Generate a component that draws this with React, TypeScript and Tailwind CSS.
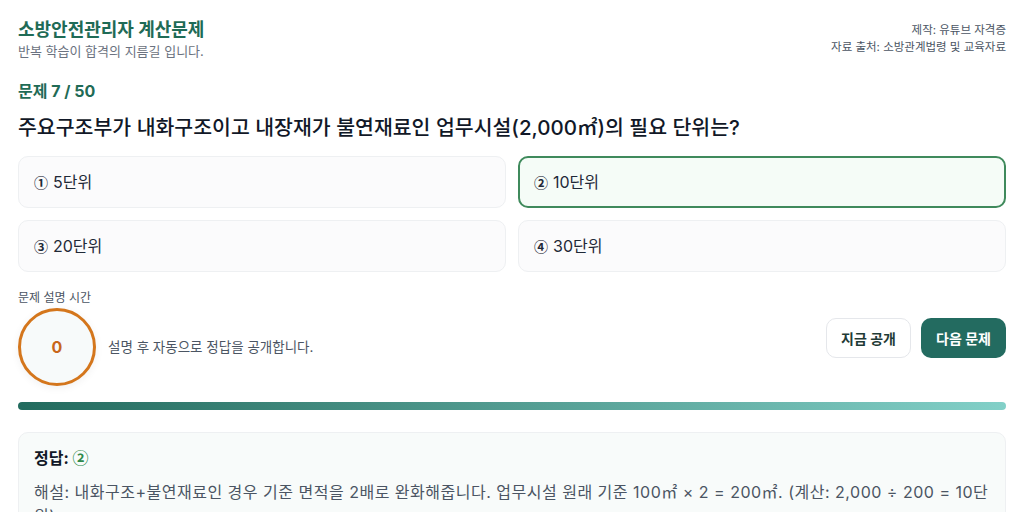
import React from 'react';

const options = [
  { mark: '①', label: '5단위' },
  { mark: '②', label: '10단위' },
  { mark: '③', label: '20단위' },
  { mark: '④', label: '30단위' },
];

const cjk = { fontFamily: '"Noto Sans CJK KR", sans-serif' };

export default function App() {
  const selected = 1;

  return (
    <div
      className="min-h-screen bg-white px-[18px] pt-[18px] pb-6 text-[#1f2937]"
      style={{ fontFamily: 'Inter, "Noto Sans CJK KR", "Noto Sans", sans-serif' }}
    >
      {/* Header */}
      <div className="flex items-start justify-between">
        <div>
          <h1 className="text-[18px] font-bold leading-[24px] text-[#1f6b56]">소방안전관리자 계산문제</h1>
          <p className="text-[13px] leading-[18px] text-[#6b7280]">반복 학습이 합격의 지름길 입니다.</p>
        </div>
        <div className="pt-[4px] text-right text-[11.5px] leading-[17px] text-[#4b5563]">
          <p>제작: 유튜브 자격증</p>
          <p>자료 출처: 소방관계법령 및 교육자료</p>
        </div>
      </div>

      {/* Question */}
      <p className="mt-[20px] text-[16px] font-bold leading-[22px] text-[#1f6b56]">문제 7 / 50</p>
      <h2 className="mt-[12px] text-[20.5px] font-medium leading-[28px] text-[#111827]">
        주요구조부가 내화구조이고 내장재가 불연재료인 업무시설(2,000㎡)의 필요 단위는?
      </h2>

      {/* Options */}
      <div className="mt-[14px] grid grid-cols-2 gap-[12px]">
        {options.map((o, i) => (
          <div
            key={o.mark}
            className={
              i === selected
                ? 'flex h-[52px] items-center rounded-[10px] border-2 border-[#3f8a5c] bg-[#f5fcf7] px-[14px] text-[16px] text-[#1f2937]'
                : 'flex h-[52px] items-center rounded-[10px] border border-[#eef0f2] bg-[#fbfbfc] px-[15px] text-[16px] text-[#1f2937]'
            }
          >
            <span className="mr-[5px] text-[14px] font-bold leading-none" style={cjk}>{o.mark}</span>
            {o.label}
          </div>
        ))}
      </div>

      {/* Timer */}
      <p className="mt-[18px] text-[12px] leading-[16px] text-[#4b5563]">문제 설명 시간</p>
      <div className="mt-[2px] flex items-center justify-between">
        <div className="flex items-center">
          <div className="flex h-[78px] w-[78px] items-center justify-center rounded-full border-[3px] border-[#d4761c] bg-[#f7fafa] shadow-[0_2px_8px_rgba(0,0,0,0.06)]">
            <span className="text-[16px] font-bold text-[#c8661a]">0</span>
          </div>
          <p className="ml-[12px] text-[13.5px] text-[#4b5563]">설명 후 자동으로 정답을 공개합니다.</p>
        </div>
        <div className="-mt-[18px] flex gap-[10px]">
          <button className="h-[40px] w-[85px] rounded-[10px] border border-[#e5e7eb] bg-white text-[14px] font-bold text-[#1f3b36]">
            지금 공개
          </button>
          <button className="h-[40px] w-[85px] rounded-[10px] bg-[#236b60] text-[14px] font-bold text-white">
            다음 문제
          </button>
        </div>
      </div>

      {/* Progress */}
      <div className="mt-[16px] h-[8px] w-full rounded-full bg-gradient-to-r from-[#226b5e] to-[#82d0c8]" />

      {/* Answer */}
      <div className="mt-[22px] rounded-[10px] border border-[#eef0f2] bg-[#f8fbfa] px-[15px] pt-[12px] pb-[14px]">
        <p className="text-[16px] font-bold leading-[24px] text-[#111827]">
          정답: <span className="text-[16px] font-bold text-[#2f8a4a]" style={cjk}>②</span>
        </p>
        <p className="mt-[10px] text-[16px] tracking-[0.5px] leading-[24px] text-[#4b5563]">
          해설: 내화구조+불연재료인 경우 기준 면적을 2배로 완화해줍니다. 업무시설 원래 기준 100㎡ × 2 = 200㎡. (계산: 2,000 ÷ 200 = 10단위)
        </p>
      </div>
    </div>
  );
}
